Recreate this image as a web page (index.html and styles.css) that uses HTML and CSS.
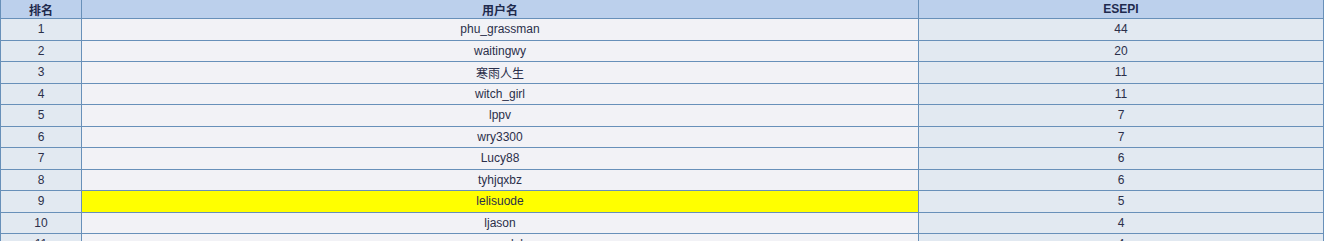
FILE: index.html
```html
<!DOCTYPE html>
<html>
<head>
<meta charset="utf-8">
<link rel="stylesheet" href="styles.css">
</head>
<body>
<table class="rank">
  <colgroup>
    <col class="c-rank">
    <col class="c-user">
    <col class="c-score">
  </colgroup>
  <thead>
    <tr><th>排名</th><th>用户名</th><th>ESEPI</th></tr>
  </thead>
  <tbody>
    <tr><td class="num">1</td><td class="user">phu_grassman</td><td class="score">44</td></tr>
    <tr><td class="num">2</td><td class="user">waitingwy</td><td class="score">20</td></tr>
    <tr><td class="num">3</td><td class="user">寒雨人生</td><td class="score">11</td></tr>
    <tr><td class="num">4</td><td class="user">witch_girl</td><td class="score">11</td></tr>
    <tr><td class="num">5</td><td class="user">lppv</td><td class="score">7</td></tr>
    <tr><td class="num">6</td><td class="user">wry3300</td><td class="score">7</td></tr>
    <tr><td class="num">7</td><td class="user">Lucy88</td><td class="score">6</td></tr>
    <tr><td class="num">8</td><td class="user">tyhjqxbz</td><td class="score">6</td></tr>
    <tr><td class="num">9</td><td class="user hl">lelisuode</td><td class="score">5</td></tr>
    <tr><td class="num">10</td><td class="user">ljason</td><td class="score">4</td></tr>
    <tr><td class="num">11</td><td class="user">amandal</td><td class="score">4</td></tr>
  </tbody>
</table>
</body>
</html>
```
FILE: styles.css
```css
html, body {
  margin: 0;
  padding: 0;
  background: #ffffff;
}
body {
  font-family: "Liberation Sans", Arial, "Noto Sans CJK SC", sans-serif;
  font-size: 12px;
  color: #2b2f4a;
  overflow: hidden;
}
.rank {
  border-collapse: collapse;
  width: 1323px;
  table-layout: fixed;
}
.c-rank { width: 81px; }
.c-user { width: 837px; }
.c-score { width: 405px; }
.rank th,
.rank td {
  border: 1px solid #6890b9;
  padding: 0;
  text-align: center;
  vertical-align: middle;
}
.rank th {
  border-top: none;
  background: #bcd0ec;
  color: #1f2a4d;
  font-weight: bold;
  height: 18px;
}
.rank td {
  height: 20.5px;
}
.rank td.num,
.rank td.score {
  background: #e2e9f1;
}
.rank td.user {
  background: #f2f2f6;
}
.rank td.user.hl {
  background: #ffff00;
}
```
